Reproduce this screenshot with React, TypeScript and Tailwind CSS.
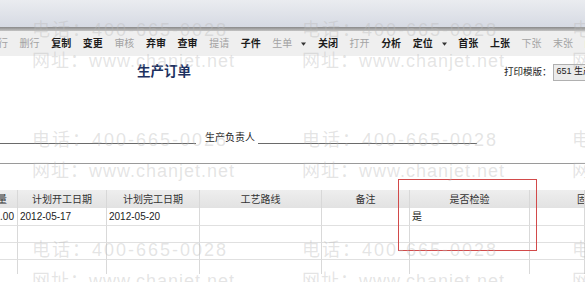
const tools = [
  { label: "行", on: false, w: "w-[10px]" },
  { label: "删行", on: false },
  { label: "复制", on: true },
  { label: "变更", on: true },
  { label: "审核", on: false },
  { label: "弃审", on: true },
  { label: "查审", on: true },
  { label: "提请", on: false },
  { label: "子件", on: true },
  { label: "生单", on: false, menu: true },
  { label: "关闭", on: true },
  { label: "打开", on: false },
  { label: "分析", on: true },
  { label: "定位", on: true, menu: true },
  { label: "首张", on: true },
  { label: "上张", on: true },
  { label: "下张", on: false },
  { label: "末张", on: false },
  { label: "阅", on: true },
];

const Caret = () => (
  <svg className="ml-[9px] shrink-0" width="5" height="4" viewBox="0 0 5 4">
    <path d="M0 0.5h5L2.5 3.8z" fill="#333" />
  </svg>
);

const Toolbar = () => (
  <div className="flex h-[25px] items-center gap-[11.6px] overflow-hidden bg-[#efefef] -ml-[2px] whitespace-nowrap text-[10px] leading-none">
    {tools.map((t, i) => (
      <div key={i} className="flex shrink-0 items-center">
        <span
          className={
            t.on ? "font-bold text-[#1c1c1c]" : "text-[#a3a3a3]"
          }
        >
          {t.label}
        </span>
        {t.menu && <Caret />}
      </div>
    ))}
  </div>
);

const Watermark = () => (
  <div className="pointer-events-none absolute inset-0 z-10 overflow-hidden">
    <div className="grid grid-cols-[270px_270px_270px] auto-rows-[110px] pl-[32px] pt-[19px] text-[18px] leading-[22px] text-[rgba(185,185,185,0.38)] whitespace-nowrap">
      {Array.from({ length: 9 }).map((_, i) => (
        <div key={i} className="flex flex-col">
          <span className="tracking-[2px]">电话：400-665-0028</span>
          <span className="mt-[9px] tracking-[1px]">网址：www.chanjet.net</span>
        </div>
      ))}
    </div>
  </div>
);

const cols = "grid grid-cols-[18px_89px_93px_122px_88px_120px_1fr]";

const headers = ["数量", "计划开工日期", "计划完工日期", "工艺路线", "备注", "是否检验", "固定提前期"];

const rows = [
  { h: "h-[18px]", cells: ["1.00", "2012-05-17", "2012-05-20", "", "", "是", ""] },
  { h: "h-[17px]", cells: ["", "", "", "", "", "", ""] },
  { h: "h-[17px]", cells: ["", "", "", "", "", "", ""] },
  { h: "h-[14px]", cells: ["", "", "", "", "", "", ""], last: true },
];

const Table = () => (
  <div className="relative mt-[26px] text-[10px]">
    <div className={`${cols} h-[18px] bg-linear-to-b from-[#eeeeee] to-[#e2e2e2] text-[#333]`}>
      {headers.map((h, i) => (
        <div
          key={i}
          className={
            "flex items-center overflow-hidden whitespace-nowrap border-r border-[#d8d8d8] " +
            (i === 0 ? "justify-end pr-[10px]" : i === 6 ? "pl-[47px]" : "justify-center")
          }
        >
          {h}
        </div>
      ))}
    </div>
    {rows.map((r, ri) => (
      <div key={ri} className={`${cols} ${r.h}`}>
        {r.cells.map((c, ci) => (
          <div
            key={ci}
            className={
              "flex items-center overflow-hidden whitespace-nowrap border-r border-[#d9d9d9] text-[#222] " +
              (r.last ? "" : "border-b border-b-[#e0e0e0] ") +
              (ci === 0 ? "justify-end pr-[3px]" : "pl-[2px]")
            }
          >
            {c}
          </div>
        ))}
      </div>
    ))}
    <div className="pointer-events-none absolute left-[398px] top-[-11px] h-[72px] w-[139px] border-[1.5px] border-[#d24a4a]" />
  </div>
);

export default function App() {
  return (
    <div
      className="relative h-[282px] w-[585px] overflow-hidden bg-white"
      style={{ fontFamily: '"Liberation Sans", "Noto Sans CJK SC", sans-serif' }}
    >
      <div className="h-[27px] bg-linear-to-b from-[#eaecf0] to-[#d6dae3]" />
      <div className="h-[4px] bg-linear-to-b from-[#8a8a8a] to-[#c4c4c4]" />
      <Toolbar />

      <div className="flex h-[32px] items-center">
        <div className="pl-[137px] text-[13.5px] font-bold text-[#1d3160]">生产订单</div>
        <div className="ml-auto flex w-[81px] shrink-0 items-center">
          <span className="shrink-0 text-[9.5px] text-[#222]">打印模版：</span>
          <div className="ml-[1px] flex h-[17px] w-[50px] shrink-0 items-center border border-[#b0b0b0] bg-[#ebebeb] pl-[3px] text-[9px] text-[#222] whitespace-nowrap">
            651 生产
          </div>
        </div>
      </div>

      <div className="mt-[43px] flex h-[13px] items-end">
        <div className="w-[196px] border-b border-[#6a6a6a]" />
        <span className="ml-[9px] self-center text-[10px] leading-[13px] text-[#222]">生产负责人</span>
        <div className="ml-[3px] w-[219px] border-b border-[#6a6a6a]" />
      </div>

      <div className="mt-[19px] border-t border-[#9a9a9a]" />

      <Table />
      <Watermark />
    </div>
  );
}
